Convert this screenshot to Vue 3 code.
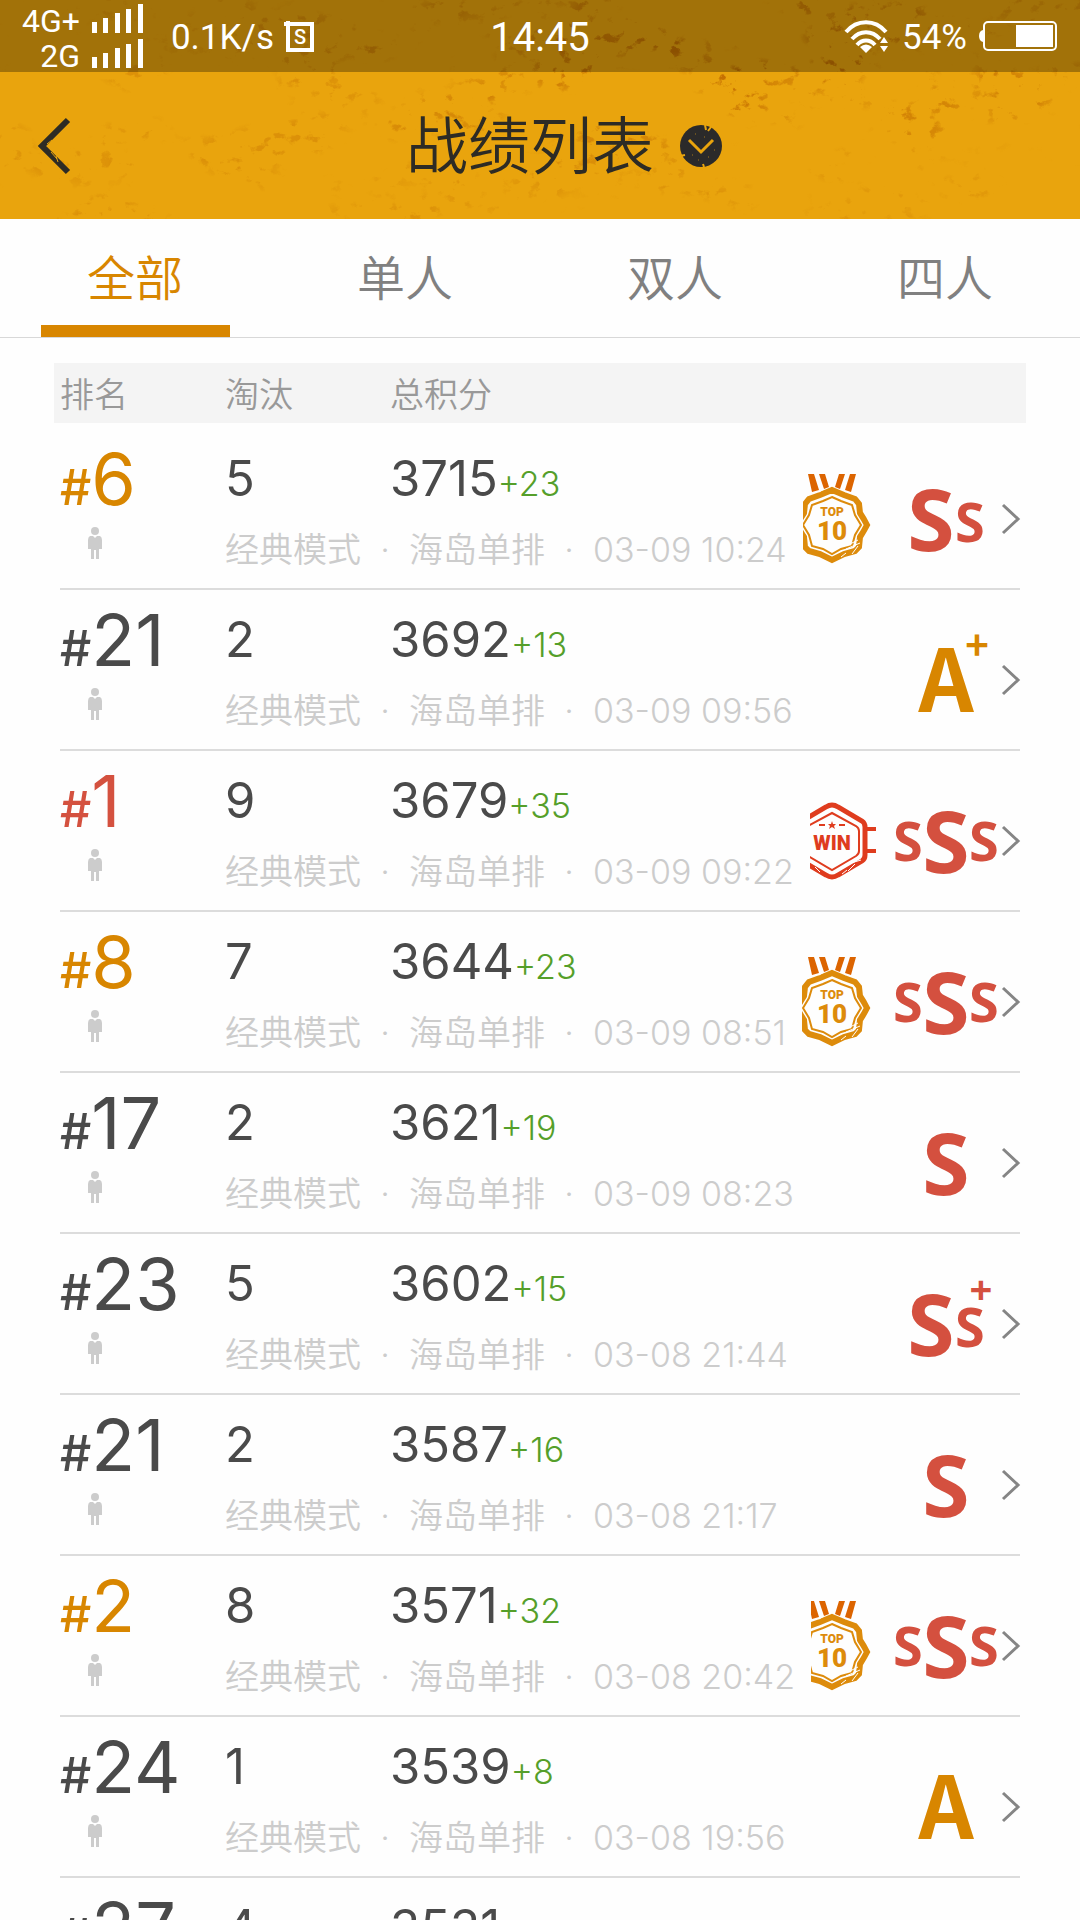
<template>
  <div class="app-shell">
    <header class="top">
      <!-- Worn paint behind both bars, densest right of the middle -->
      <svg class="texture" aria-hidden="true">
        <filter id="grain" x="0" y="0" width="100%" height="100%" color-interpolation-filters="sRGB">
          <feTurbulence type="fractalNoise" baseFrequency="0.07 0.09" numOctaves="5" seed="8" result="fine" />
          <feColorMatrix in="fine" values="0 0 0 0 0.76  0 0 0 0 0.42  0 0 0 0 0  9 0 0 0 -5.6" result="spots" />
          <feTurbulence type="fractalNoise" baseFrequency="0.008 0.016" numOctaves="3" seed="21" result="wide" />
          <feColorMatrix in="wide" values="0 0 0 0 0  0 0 0 0 0  0 0 0 0 0  0 6 0 0 -2.8" result="mask" />
          <feComposite in="spots" in2="mask" operator="in" />
        </filter>
        <radialGradient id="wear" cx="0.68" cy="0.3" r="0.5">
          <stop offset="0" stop-color="#fff" />
          <stop offset="0.5" stop-color="#999" />
          <stop offset="1" stop-color="#555" />
        </radialGradient>
        <mask id="wear-mask">
          <rect width="100%" height="100%" fill="url(#wear)" />
        </mask>
        <g mask="url(#wear-mask)">
          <rect width="100%" height="100%" filter="url(#grain)" />
        </g>
      </svg>

      <div class="status-bar">
        <div class="status-left">
          <div class="sims">
            <div v-for="sim in sims" :key="sim" class="sim">
              <span>{{ sim }}</span>
              <svg width="51" height="30" viewBox="0 0 51 30" fill="#fff">
                <path d="M0 19h5v11H0zM11 15h5v15h-5zM23 10h5v20h-5zM34 6h5v24h-5zM46 1h5v29h-5z" />
              </svg>
            </div>
          </div>
          <span class="speed">0.1K/s</span>
          <svg width="30" height="34" viewBox="0 0 30 34">
            <path d="M0 5h28v26H4V2" fill="none" stroke="#fff" stroke-width="4" />
            <text x="16" y="25" class="sogou-letter">S</text>
          </svg>
        </div>
        <time class="clock">14:45</time>
        <div class="status-right">
          <svg width="46" height="34" viewBox="0 0 46 34" fill="none" stroke="#fff" stroke-width="4">
            <path d="M2 13C13 0 31 0 42 13" />
            <path d="M8 20c8-9 20-9 28 0" />
            <path d="M13 26c5-6 13-6 18 0" />
            <path d="M16 28q6-5 12 0l-6 6z" fill="#fff" stroke="none" />
            <path d="M36 24l4-6 4 6zM36 27l4 6 4-6z" fill="#fff" stroke="none" />
          </svg>
          <span class="battery-text">54%</span>
          <svg width="79" height="32" viewBox="0 0 79 32">
            <path d="M4 10q-4 1-4 6t4 6z" fill="#fff" />
            <rect x="5" y="2" width="72" height="28" rx="4" fill="none" stroke="#fff" stroke-width="2" />
            <rect x="37" y="5" width="37" height="22" fill="#fff" />
          </svg>
        </div>
      </div>

      <div class="nav-bar">
        <button class="back" type="button" aria-label="返回">
          <svg width="32" height="56" viewBox="0 0 32 56">
            <path d="M29 2L3 28l26 26" fill="none" stroke="#2d2b25" stroke-width="6" />
            <path d="M8 26l5-4M12 34l6 7M17 38l2 6" stroke="#e9a40d" stroke-width="1" />
          </svg>
        </button>
        <div class="title-group">
          <h1>战绩列表</h1>
          <button class="switch" type="button" aria-label="切换">
            <svg width="42" height="42" viewBox="0 0 42 42">
              <circle cx="21" cy="21" r="21" fill="#2b2a2a" />
              <path d="M9 15l12 12 12-12" fill="none" stroke="#e9a40d" stroke-width="3" />
              <path d="M25 0l1 5M31 2l-3 4M0 31l5-1M24 42l-1-3" stroke="#e9a40d" stroke-width="2" />
              <path d="M12 30h1M18 35h1M28 32h1M15 9h1M24 12h1M34 25h1" stroke="#a5771a" stroke-width="1" />
            </svg>
          </button>
        </div>
      </div>
    </header>

    <nav class="tabs">
      <button
        v-for="tab in tabs"
        :key="tab"
        type="button"
        :class="['tab', { active: tab === activeTab }]"
        @click="activeTab = tab"
      >
        {{ tab }}
      </button>
    </nav>

    <main class="list">
      <table>
        <thead>
          <tr class="head-row">
            <th>排名</th>
            <th>淘汰</th>
            <th>总积分</th>
          </tr>
        </thead>
        <tbody>
          <tr v-for="(match, index) in matches" :key="index" class="match-row">
            <td :class="['rank', rankColor(match.rank)]">
              <span class="hash">#</span>{{ match.rank }}
            </td>
            <td class="kills">{{ match.kills }}</td>
            <td class="score">
              {{ match.score }}<span v-if="match.gain" class="gain">+{{ match.gain }}</span>
            </td>
            <td class="mode-icon">
              <svg width="14" height="34" viewBox="0 0 14 34" fill="#ccc">
                <circle cx="7" cy="5" r="4" />
                <path d="M2 10h3l2 2 2-2h3q2 1 2 4v9h-3v10H8V24H6v9H3V23H0v-9q0-3 2-4z" />
              </svg>
            </td>
            <td class="meta">
              <template v-if="match.date">
                <span>经典模式</span><i>·</i><span>海岛单排</span><i>·</i><time>{{ match.date }}</time>
              </template>
            </td>

            <td class="medal">
              <svg v-if="match.medal === 'top10'" width="88" height="98" viewBox="0 0 88 98">
                <path d="M20 4h6l5 16-7 2zM31 4h6l4 13-5 2zM51 4h6l-5 15-5-2zM62 4h6l-5 18-6-2z" fill="#dc6400" />
                <g fill="none" stroke="#dd8b0b">
                  <path
                    d="M44 20l12 5 11 4 4 5 1 9q4 6 7 12-3 6-7 12l-1 10-4 4-11 3-12 6-12-6-11-3-4-4-1-10q-4-6-7-12 3-6 7-12l1-9 4-5 11-4z"
                    stroke-width="6"
                  />
                  <path
                    d="M44 27l9 4 11 4 3 10q3 5 6 10-3 5-6 10l-3 11-11 3-9 5-9-5-11-3-3-11q-3-5-6-10 3-5 6-10l3-10 11-4z"
                    stroke-width="2"
                  />
                </g>
                <path d="M62 74l8-4M58 79l14-6M64 84l6-8M53 87l5-4M31 22l5-3" stroke="#fff" stroke-width="1" />
                <text x="44" y="46" class="medal-text top-word">TOP</text>
                <text x="44" y="70" class="medal-text top-number">10</text>
              </svg>
              <svg v-else-if="match.medal === 'win'" width="88" height="98" viewBox="0 0 88 98">
                <g fill="none" stroke="#df3c1e">
                  <path d="M44 13q3 0 6 2l24 14q3 2 3 6v28q0 4-3 6L50 83q-3 2-6 2t-6-2L14 69q-3-2-3-6V35q0-4 3-6l24-14q3-2 6-2z" stroke-width="5" />
                  <path d="M44 21l24 13q3 2 3 5v20q0 3-3 5L44 78 20 64q-3-2-3-5V39q0-3 3-5z" stroke-width="2" />
                  <path d="M79 37h9M79 59h9" stroke-width="4" />
                  <path d="M31 33h6M51 33h6" stroke-width="2" />
                </g>
                <path d="M44 29l1 3h3l-2 2 1 3-3-2-3 2 1-3-2-2h3z" fill="#df3c1e" />
                <path d="M60 79l7-7M63 71l10-3M54 82l5-4M27 75l5 5" stroke="#fff" stroke-width="1" />
                <text x="44" y="58" class="medal-text win-word">WIN</text>
              </svg>
            </td>

            <td class="grade">
              <svg v-if="match.grade" width="112" height="98" viewBox="0 0 112 98">
                <text
                  v-for="(part, i) in grades[match.grade]"
                  :key="i"
                  :x="part.x"
                  :y="part.y"
                  :class="['grade-letter', part.size, { amber: match.grade.startsWith('A') }]"
                >{{ part.char }}</text>
              </svg>
            </td>

            <td class="arrow">
              <svg width="18" height="30" viewBox="0 0 18 30">
                <path d="M1 1l15 14L1 29" fill="none" stroke="#858585" stroke-width="3" />
              </svg>
            </td>
          </tr>
        </tbody>
      </table>
    </main>
  </div>
</template>

<script setup>
import { ref } from 'vue'

const sims = ['4G+', '2G']
const tabs = ['全部', '单人', '双人', '四人']
const activeTab = ref('全部')

const matches = [
  { rank: 6, kills: 5, score: 3715, gain: 23, date: '03-09 10:24', medal: 'top10', grade: 'SS' },
  { rank: 21, kills: 2, score: 3692, gain: 13, date: '03-09 09:56', grade: 'A+' },
  { rank: 1, kills: 9, score: 3679, gain: 35, date: '03-09 09:22', medal: 'win', grade: 'SSS' },
  { rank: 8, kills: 7, score: 3644, gain: 23, date: '03-09 08:51', medal: 'top10', grade: 'SSS' },
  { rank: 17, kills: 2, score: 3621, gain: 19, date: '03-09 08:23', grade: 'S' },
  { rank: 23, kills: 5, score: 3602, gain: 15, date: '03-08 21:44', grade: 'SS+' },
  { rank: 21, kills: 2, score: 3587, gain: 16, date: '03-08 21:17', grade: 'S' },
  { rank: 2, kills: 8, score: 3571, gain: 32, date: '03-08 20:42', medal: 'top10', grade: 'SSS' },
  { rank: 24, kills: 1, score: 3539, gain: 8, date: '03-08 19:56', grade: 'A' },
  { rank: 27, kills: 4, score: 3531 },
]

// Letters of each grade stamp, placed around its centre
const grades = {
  A: [{ char: 'A', x: 56, y: 81, size: 'large' }],
  'A+': [
    { char: 'A', x: 56, y: 81, size: 'large' },
    { char: '+', x: 87, y: 29, size: 'plus' },
  ],
  S: [{ char: 'S', x: 56, y: 81, size: 'large' }],
  SS: [
    { char: 'S', x: 41, y: 81, size: 'large' },
    { char: 'S', x: 80, y: 72, size: 'small' },
  ],
  'SS+': [
    { char: 'S', x: 41, y: 81, size: 'large' },
    { char: 'S', x: 80, y: 72, size: 'small' },
    { char: '+', x: 91, y: 29, size: 'plus' },
  ],
  SSS: [
    { char: 'S', x: 18, y: 69, size: 'small' },
    { char: 'S', x: 56, y: 81, size: 'large' },
    { char: 'S', x: 94, y: 69, size: 'small' },
  ],
}

// First place red, top ten amber
function rankColor(rank) {
  if (rank === 1) return 'rank-first'
  return rank <= 10 ? 'rank-top' : ''
}
</script>

<style>
body {
  background: #fff;
}
</style>

<style scoped>
.app-shell {
  display: flex;
  flex-direction: column;
  height: 100vh;
  overflow: hidden;
  background: #fefefe;
  color: #4a4a4a;
  font-family: Inter, "Noto Sans CJK SC", sans-serif;
}

button {
  border: 0;
  padding: 0;
  background: none;
  font-family: inherit;
  cursor: pointer;
}

svg {
  display: block;
  flex-shrink: 0;
  overflow: visible;
}

/* Header */
.top {
  position: relative;
  flex-shrink: 0;
  background: #e9a40d;
}

.texture {
  position: absolute;
  inset: 0;
  width: 100%;
  height: 100%;
}

.status-bar {
  position: relative;
  display: grid;
  grid-template-columns: 1fr auto 1fr;
  align-items: center;
  height: 72px;
  padding: 0 22px;
  background: rgba(0, 0, 0, 0.3);
  color: #fff;
  font-family: Roboto, sans-serif;
  font-size: 35px;
}

.status-left,
.status-right {
  display: flex;
  align-items: center;
}

.status-right {
  justify-content: flex-end;
  gap: 12px;
}

.sims {
  margin-right: 28px;
  padding-bottom: 2px;
}

.sim {
  display: flex;
  justify-content: flex-end;
  align-items: center;
  gap: 12px;
  height: 35px;
  font-size: 32px;
  line-height: 35px;
}

.sim span {
  padding-top: 8px;
}

.speed,
.battery-text,
.clock {
  padding-top: 2px;
}

.speed {
  margin-right: 10px;
}

.sogou-letter {
  fill: #fff;
  font-size: 20px;
  font-weight: 500;
  text-anchor: middle;
}

.clock {
  font-size: 40px;
}

.nav-bar {
  position: relative;
  display: flex;
  align-items: center;
  height: 147px;
  padding-right: 32px;
}

.back {
  width: 80px;
  padding-left: 39px;
}

.title-group {
  display: flex;
  flex: 1;
  justify-content: center;
  align-items: center;
  gap: 26px;
}

h1 {
  margin: 0;
  padding-top: 2px;
  color: #2d2b25;
  font-size: 62px;
  font-weight: 350;
  line-height: 80px;
}

/* Tabs */
.tabs {
  display: flex;
  flex-shrink: 0;
  height: 119px;
  box-sizing: border-box;
  border-bottom: 1px solid #d8d8d8;
}

.tab {
  display: flex;
  flex: 1;
  flex-direction: column;
  align-items: center;
  justify-content: space-between;
  padding-top: 25px;
  color: #808080;
  font-size: 48px;
  font-weight: 350;
  line-height: 70px;
}

.tab::after {
  content: "";
  width: 70%;
  height: 12px;
}

.tab.active {
  color: #d88600;
}

.tab.active::after {
  background: #d88600;
}

/* List */
.list {
  flex: 1;
  min-height: 0;
  padding: 25px 60px 0;
  overflow-y: auto;
  scrollbar-width: none;
}

table,
thead,
tbody {
  display: block;
}

tr {
  display: grid;
  grid-template-columns: 165px 165px auto minmax(0, 1fr) 112px 18px;
}

th,
td {
  padding: 0;
  text-align: left;
}

.head-row {
  margin: 0 -6px 6px;
  padding: 3px 6px 0;
  background: #f4f4f4;
  color: #999;
  font-size: 34px;
  line-height: 57px;
}

th {
  font-weight: 350;
}

.match-row {
  grid-template-rows: 72px 70px;
  padding: 14px 0 3px;
  border-bottom: 2px solid #dcdcdc;
}

.rank,
.kills,
.score {
  grid-row: 1;
  font-size: 49px;
  line-height: 72px;
  white-space: nowrap;
}

.rank {
  font-size: 72px;
}

.hash {
  font-size: 49px;
  font-weight: 500;
}

.rank-first {
  color: #d4513f;
}

.rank-top {
  color: #d88600;
}

.gain {
  color: #559f2a;
  font-size: 34px;
  font-weight: 300;
}

.mode-icon {
  grid-area: 2 / 1;
  padding: 11px 0 0 28px;
}

.meta {
  display: flex;
  grid-area: 2 / 2 / 3 / 4;
  color: #ccc;
  font-size: 34px;
  font-weight: 350;
  line-height: 70px;
  white-space: nowrap;
}

.meta time {
  font-weight: 300;
}

.meta i {
  width: 48px;
  font-style: normal;
  text-align: center;
}

.medal,
.grade,
.arrow {
  display: flex;
  align-items: center;
  grid-row: 1 / 3;
  padding-top: 10px;
}

.medal {
  grid-column: 4;
  justify-content: flex-end;
  margin: 0 14px 0 16px;
  overflow: hidden;
}

.grade {
  grid-column: 5;
}

.arrow {
  grid-column: 6;
}

.medal-text {
  font-family: Roboto, sans-serif;
  font-weight: 900;
  text-anchor: middle;
}

.grade-letter {
  fill: #d4503f;
  font-family: "Noto Sans", sans-serif;
  font-weight: 700;
  text-anchor: middle;
}

.grade-letter.amber {
  fill: #d88600;
  font-family: "Noto Sans CJK SC", sans-serif;
}

.top-word {
  fill: #dd8b0b;
  font-size: 12px;
}

.top-number {
  fill: #dd8b0b;
  font-size: 26px;
}

.win-word {
  fill: #df3c1e;
  font-size: 20px;
}

.large {
  font-size: 86px;
}

.small {
  font-size: 54px;
}

.plus {
  font-size: 40px;
}
</style>
